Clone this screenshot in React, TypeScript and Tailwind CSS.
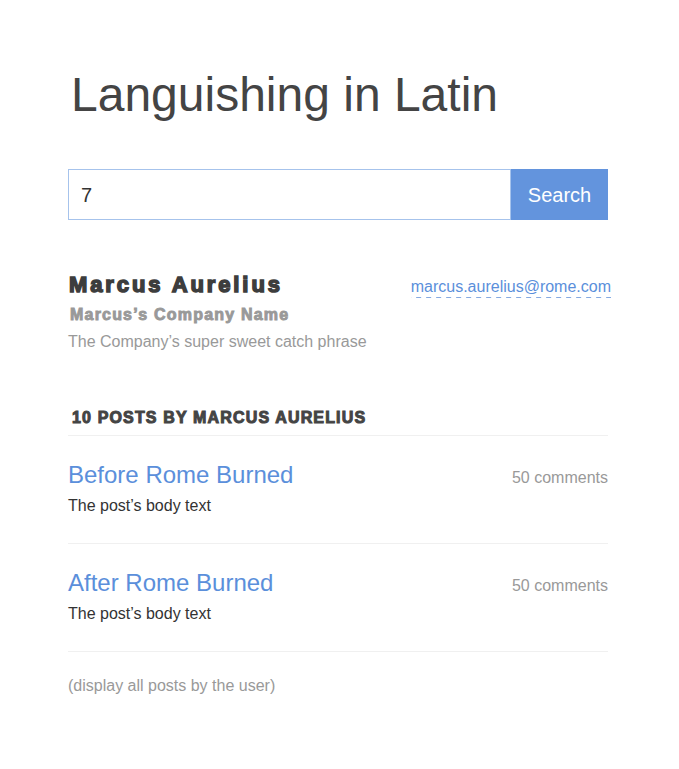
import React, { useState } from 'react';

const posts = [
  { id: 1, title: 'Before Rome Burned', body: 'The post’s body text', comments: 50 },
  { id: 2, title: 'After Rome Burned', body: 'The post’s body text', comments: 50 },
];

const App: React.FC = () => {
  const [query, setQuery] = useState('7');

  return (
    <div className="min-h-[769px] bg-white font-['Liberation_Sans',Arial,sans-serif] text-[#444]">
      <div className="w-[540px] ml-[68px] pt-[71px]">
        {/* Title */}
        <h1 className="pl-[3px] text-[48px] leading-[48px] text-[#444]">Languishing in Latin</h1>

        {/* Search */}
        <form className="mt-[50px] flex h-[51px]" onSubmit={(e) => e.preventDefault()}>
          <input
            value={query}
            onChange={(e) => setQuery(e.target.value)}
            className="flex-1 min-w-0 border border-[#a6c3ec] px-[12px] text-[20px] text-[#333] outline-none"
          />
          <button type="submit" className="w-[97px] bg-[#6394dd] text-[20px] text-white">
            Search
          </button>
        </form>

        {/* Profile */}
        <div className="mt-[52px] flex items-start justify-between">
          <div>
            <h2 className="pl-[1px] text-[22px] leading-[26px] font-bold tracking-[2.9px] text-[#3d3d3d] [-webkit-text-stroke:1.5px_#3d3d3d]">
              Marcus Aurelius
            </h2>
            <p className="mt-[7px] ml-[2px] text-[16px] leading-[20px] font-bold tracking-[1.2px] text-[#999] [-webkit-text-stroke:0.9px_#999]">
              Marcus’s Company Name
            </p>
            <p className="mt-[7px] text-[16px] leading-[20px] text-[#999]">The Company’s super sweet catch phrase</p>
          </div>
          <a
            href="#"
            className="mt-[5px] -mr-[3px] text-[16px] leading-[20px] text-[#5b8fdb] bg-[linear-gradient(to_right,#86aae2_50%,transparent_50%)] bg-[length:10px_1px] bg-repeat-x bg-bottom pb-[1px]"
          >
            marcus.aurelius@rome.com
          </a>
        </div>

        {/* Posts */}
        <h3 className="mt-[56px] pl-[4px] pb-[7px] border-b border-[#f0f0f0] text-[16px] leading-[20px] font-bold uppercase tracking-[1.15px] text-[#444] [-webkit-text-stroke:1px_#444]">
          10 Posts by Marcus Aurelius
        </h3>

        {posts.map((post) => (
          <div key={post.id} className="pt-[25px] pb-[27px] border-b border-[#f0f0f0]">
            <div className="flex items-baseline justify-between">
              <a href="#" className="text-[24px] leading-[28px] text-[#5b8fdb]">
                {post.title}
              </a>
              <span className="text-[16px] leading-[20px] text-[#999]">{post.comments} comments</span>
            </div>
            <p className="mt-[7px] text-[16px] leading-[20px] text-[#333]">{post.body}</p>
          </div>
        ))}

        <p className="mt-[24px] text-[16px] leading-[20px] text-[#999]">(display all posts by the user)</p>
      </div>
    </div>
  );
};

export default App;
